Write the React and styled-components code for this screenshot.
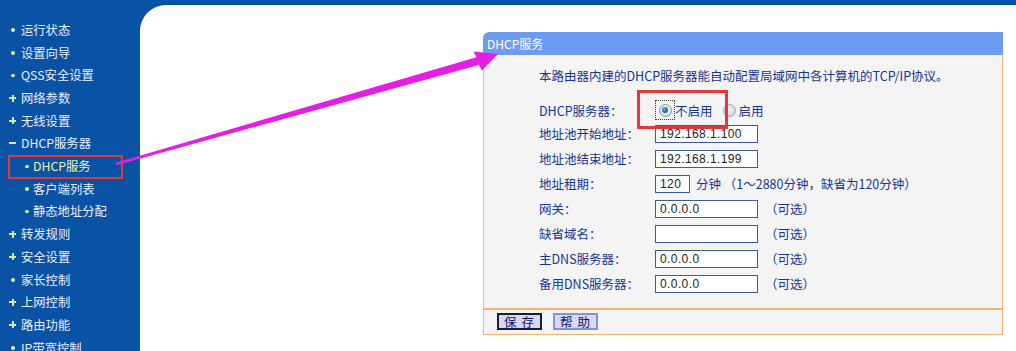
import React from "react";
import styled, { createGlobalStyle, css } from "styled-components";

const GlobalStyle = createGlobalStyle`
  html, body {
    margin: 0;
    padding: 0;
    background: #0a52a3;
    overflow: hidden;
  }
  body {
    font-family: "Noto Sans CJK SC", "Liberation Sans", sans-serif;
  }
  * { box-sizing: border-box; }
`;

const Page = styled.div`
  position: relative;
  display: flex;
  width: 1016px;
  height: 351px;
  overflow: hidden;
  background: #0a52a3;
`;

const Sidebar = styled.nav`
  width: 140px;
  flex: none;
  display: flex;
  flex-direction: column;
  padding-top: 18.6px;
`;

const NavItem = styled.div`
  position: relative;
  height: 22.7px;
  flex: none;
  display: flex;
  align-items: center;
  padding-left: ${(p) => (p.$sub ? 22 : 8)}px;
  font-size: 12.3px;
  color: ${(p) => (p.$active ? "#eef3a8" : "#e9efff")};
  white-space: nowrap;
  ${(p) =>
    p.$active &&
    css`
      &::after {
        content: "";
        position: absolute;
        left: 8px;
        right: 17px;
        top: 0;
        bottom: -2px;
        border: 2.5px solid #e2383a;
      }
    `}
`;

const Bullet = styled.span`
  position: relative;
  width: 9px;
  height: 9px;
  flex: none;
  margin-right: ${(p) => (p.$sub ? 2 : 4)}px;
  &::before,
  &::after {
    content: "";
    position: absolute;
    background: #cdef9c;
  }
  ${(p) =>
    p.$kind === "dot" &&
    css`
      &::before {
        left: 3px;
        top: 3px;
        width: 3.5px;
        height: 3.5px;
        border-radius: 50%;
      }
      &::after { display: none; }
    `}
  ${(p) =>
    p.$kind === "plus" &&
    css`
      &::before {
        left: 1px;
        top: 3.5px;
        width: 7px;
        height: 2px;
      }
      &::after {
        left: 3.5px;
        top: 1px;
        width: 2px;
        height: 7px;
      }
    `}
  ${(p) =>
    p.$kind === "minus" &&
    css`
      &::before {
        left: 1px;
        top: 3.5px;
        width: 7px;
        height: 2px;
      }
      &::after { display: none; }
    `}
`;

const Main = styled.main`
  flex: 1;
  margin-top: 5px;
  background: #ffffff;
  border-top-left-radius: 26px;
  padding: 27px 0 0 343px;
`;

const Panel = styled.section`
  width: 520px;
`;

const PanelHeader = styled.div`
  height: 23px;
  display: flex;
  align-items: center;
  padding-left: 4px;
  background: #6c9cf1;
  border-top-left-radius: 6px;
  color: #ffffff;
  font-size: 12px;
`;

const PanelBody = styled.div`
  background: #f4f4f4;
  border: 1px solid #f6b46c;
  border-top: none;
  padding: 11px 0 12px 55px;
  color: #16358e;
  font-size: 12.5px;
`;

const Desc = styled.p`
  margin: 0 0 13px;
  line-height: 20px;
  white-space: nowrap;
`;

const FormRow = styled.div`
  display: flex;
  align-items: center;
  height: ${(p) => (p.$short ? 22 : 25)}px;
  white-space: nowrap;
`;

const Label = styled.span`
  width: 116px;
  flex: none;
`;

const TextInput = styled.input`
  width: ${(p) => (p.$narrow ? 35 : 103)}px;
  height: 18px;
  flex: none;
  border: 1px solid #3b5c9c;
  background: #ffffff;
  padding: 0 0 0 4px;
  font-family: "Liberation Sans", sans-serif;
  font-size: 12px;
  letter-spacing: 0.4px;
  color: #222;
  outline: none;
`;

const Hint = styled.span`
  margin-left: ${(p) => (p.$tight ? 6 : 7)}px;
`;

const RadioGroup = styled.div`
  position: relative;
  display: flex;
  align-items: center;
  &::after {
    content: "";
    position: absolute;
    left: -18px;
    top: -10px;
    width: 85px;
    height: 33px;
    border: 3px solid #e2383a;
  }
`;

const RadioOption = styled.label`
  display: flex;
  align-items: center;
  margin-right: ${(p) => (p.$last ? 0 : 10)}px;
`;

const RadioBox = styled.span`
  display: flex;
  align-items: center;
  justify-content: center;
  padding: 0;
  margin-right: ${(p) => (p.$focused ? 0 : 3)}px;
  outline: ${(p) => (p.$focused ? "1px dotted #333" : "none")};
  outline-offset: -1px;
  width: ${(p) => (p.$focused ? 20 : 13)}px;
  height: ${(p) => (p.$focused ? 20 : 13)}px;
`;

const RadioCircle = styled.span`
  position: relative;
  width: 13px;
  height: 13px;
  border-radius: 50%;
  border: 1px solid ${(p) => (p.$checked ? "#8d9aa8" : "#9ca8b4")};
  background: ${(p) =>
    p.$checked
      ? "radial-gradient(circle at 50% 40%, #ffffff 0%, #d6dde4 70%, #b8c2cc 100%)"
      : "radial-gradient(circle at 50% 40%, #f4f6f8 0%, #d8dde2 60%, #b4bcc4 100%)"};
  ${(p) =>
    p.$checked &&
    css`
      &::after {
        content: "";
        position: absolute;
        left: 2.5px;
        top: 2.5px;
        width: 6px;
        height: 6px;
        border-radius: 50%;
        background: radial-gradient(circle at 40% 35%, #5fb0d8 0%, #1f6a9c 60%, #0f3f6a 100%);
      }
    `}
`;

const PanelFooter = styled.div`
  display: flex;
  gap: 11px;
  padding: 3px 0 4px 13px;
  background: #f4f4f4;
  border: 1px solid #f6b46c;
`;

const Button = styled.button`
  width: 45px;
  height: 17px;
  padding: 0;
  display: flex;
  align-items: center;
  justify-content: center;
  background: #d6d6f5;
  border: ${(p) => (p.$primary ? "2px solid #1c1c2c" : "2px solid #8f8fd0")};
  font-family: "Noto Sans CJK SC", sans-serif;
  font-size: 12.5px;
  color: #14145a;
  letter-spacing: 1px;
  cursor: pointer;
`;

const ArrowLayer = styled.svg`
  position: absolute;
  left: 0;
  top: 0;
  width: 1016px;
  height: 351px;
  pointer-events: none;
`;

const navItems = [
  { kind: "dot", text: "运行状态" },
  { kind: "dot", text: "设置向导" },
  { kind: "dot", text: "QSS安全设置" },
  { kind: "plus", text: "网络参数" },
  { kind: "plus", text: "无线设置" },
  { kind: "minus", text: "DHCP服务器" },
  { kind: "dot", text: "DHCP服务", sub: true, active: true },
  { kind: "dot", text: "客户端列表", sub: true },
  { kind: "dot", text: "静态地址分配", sub: true },
  { kind: "plus", text: "转发规则" },
  { kind: "plus", text: "安全设置" },
  { kind: "dot", text: "家长控制" },
  { kind: "plus", text: "上网控制" },
  { kind: "plus", text: "路由功能" },
  { kind: "dot", text: "IP带宽控制" },
];

const fields = [
  { label: "地址池开始地址：", value: "192.168.1.100" },
  { label: "地址池结束地址：", value: "192.168.1.199" },
  { label: "地址租期：", value: "120", narrow: true, hint: "分钟 （1～2880分钟，缺省为120分钟）" },
  { label: "网关：", value: "0.0.0.0", hint: "（可选）" },
  { label: "缺省域名：", value: "", hint: "（可选）" },
  { label: "主DNS服务器：", value: "0.0.0.0", hint: "（可选）" },
  { label: "备用DNS服务器：", value: "0.0.0.0", hint: "（可选）" },
];

export default function App() {
  return (
    <>
      <GlobalStyle />
      <Page>
        <Sidebar>
          {navItems.map((item) => (
            <NavItem key={item.text} $sub={item.sub} $active={item.active}>
              <Bullet $kind={item.kind} $sub={item.sub} />
              {item.text}
            </NavItem>
          ))}
        </Sidebar>
        <Main>
          <Panel>
            <PanelHeader>DHCP服务</PanelHeader>
            <PanelBody>
              <Desc>本路由器内建的DHCP服务器能自动配置局域网中各计算机的TCP/IP协议。</Desc>
              <FormRow $short>
                <Label>DHCP服务器：</Label>
                <RadioGroup>
                  <RadioOption>
                    <RadioBox $focused>
                      <RadioCircle $checked />
                    </RadioBox>
                    不启用
                  </RadioOption>
                  <RadioOption $last>
                    <RadioBox>
                      <RadioCircle />
                    </RadioBox>
                    启用
                  </RadioOption>
                </RadioGroup>
              </FormRow>
              {fields.map((f) => (
                <FormRow key={f.label}>
                  <Label>{f.label}</Label>
                  <TextInput $narrow={f.narrow} defaultValue={f.value} readOnly />
                  {f.hint && <Hint $tight={f.narrow}>{f.hint}</Hint>}
                </FormRow>
              ))}
            </PanelBody>
            <PanelFooter>
              <Button $primary>保 存</Button>
              <Button>帮 助</Button>
            </PanelFooter>
          </Panel>
        </Main>
        <ArrowLayer viewBox="0 0 1016 351">
          <polygon
            fill="#e21fe2"
            points="116.3,165.2 115.7,162.8 476.5,57.3 473.5,51.5 498,54 482,70.5 478.8,65"
          />
        </ArrowLayer>
      </Page>
    </>
  );
}
